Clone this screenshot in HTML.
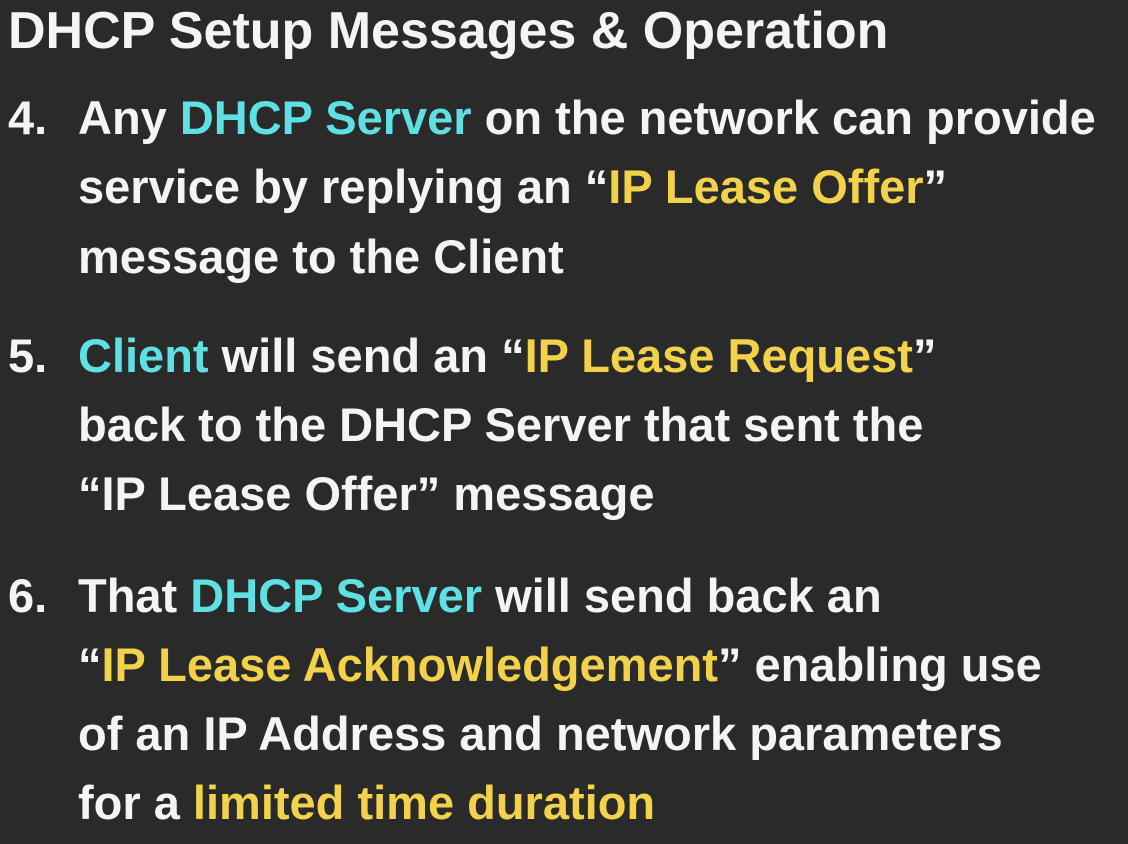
<!DOCTYPE html>
<html><head><meta charset="utf-8"><style>
html,body{margin:0;padding:0;}
body{width:1128px;height:844px;background:#2a2a2a;overflow:hidden;position:relative;font-family:"Liberation Sans",sans-serif;font-weight:bold;color:#f4f4f4;}
.l{position:absolute;font-size:47px;line-height:50px;white-space:nowrap;}
.t{font-size:52px;}
.c{color:#5fe0e2;}
.y{color:#f2d24a;}
</style></head><body>
<div class="l t" style="left:8px;top:6px">DHCP Setup Messages &amp; Operation</div>
<div class="l" style="left:8px;top:93px">4.</div>
<div class="l" style="left:78px;top:93px">Any <span class="c">DHCP Server</span> on the network can provide</div>
<div class="l" style="left:78px;top:162px">service by replying an “<span class="y">IP Lease Offer</span>”</div>
<div class="l" style="left:78px;top:232px">message to the Client</div>
<div class="l" style="left:8px;top:331px">5.</div>
<div class="l" style="left:78px;top:331px"><span class="c">Client</span> will send an “<span class="y">IP Lease Request</span>”</div>
<div class="l" style="left:78px;top:400px">back to the DHCP Server that sent the</div>
<div class="l" style="left:78px;top:469px">“IP Lease Offer” message</div>
<div class="l" style="left:8px;top:571px">6.</div>
<div class="l" style="left:78px;top:571px">That <span class="c">DHCP Server</span> will send back an</div>
<div class="l" style="left:78px;top:640px">“<span class="y">IP Lease Acknowledgement</span>” enabling use</div>
<div class="l" style="left:78px;top:709px">of an IP Address and network parameters</div>
<div class="l" style="left:78px;top:778px">for a <span class="y">limited time duration</span></div>
</body></html>
